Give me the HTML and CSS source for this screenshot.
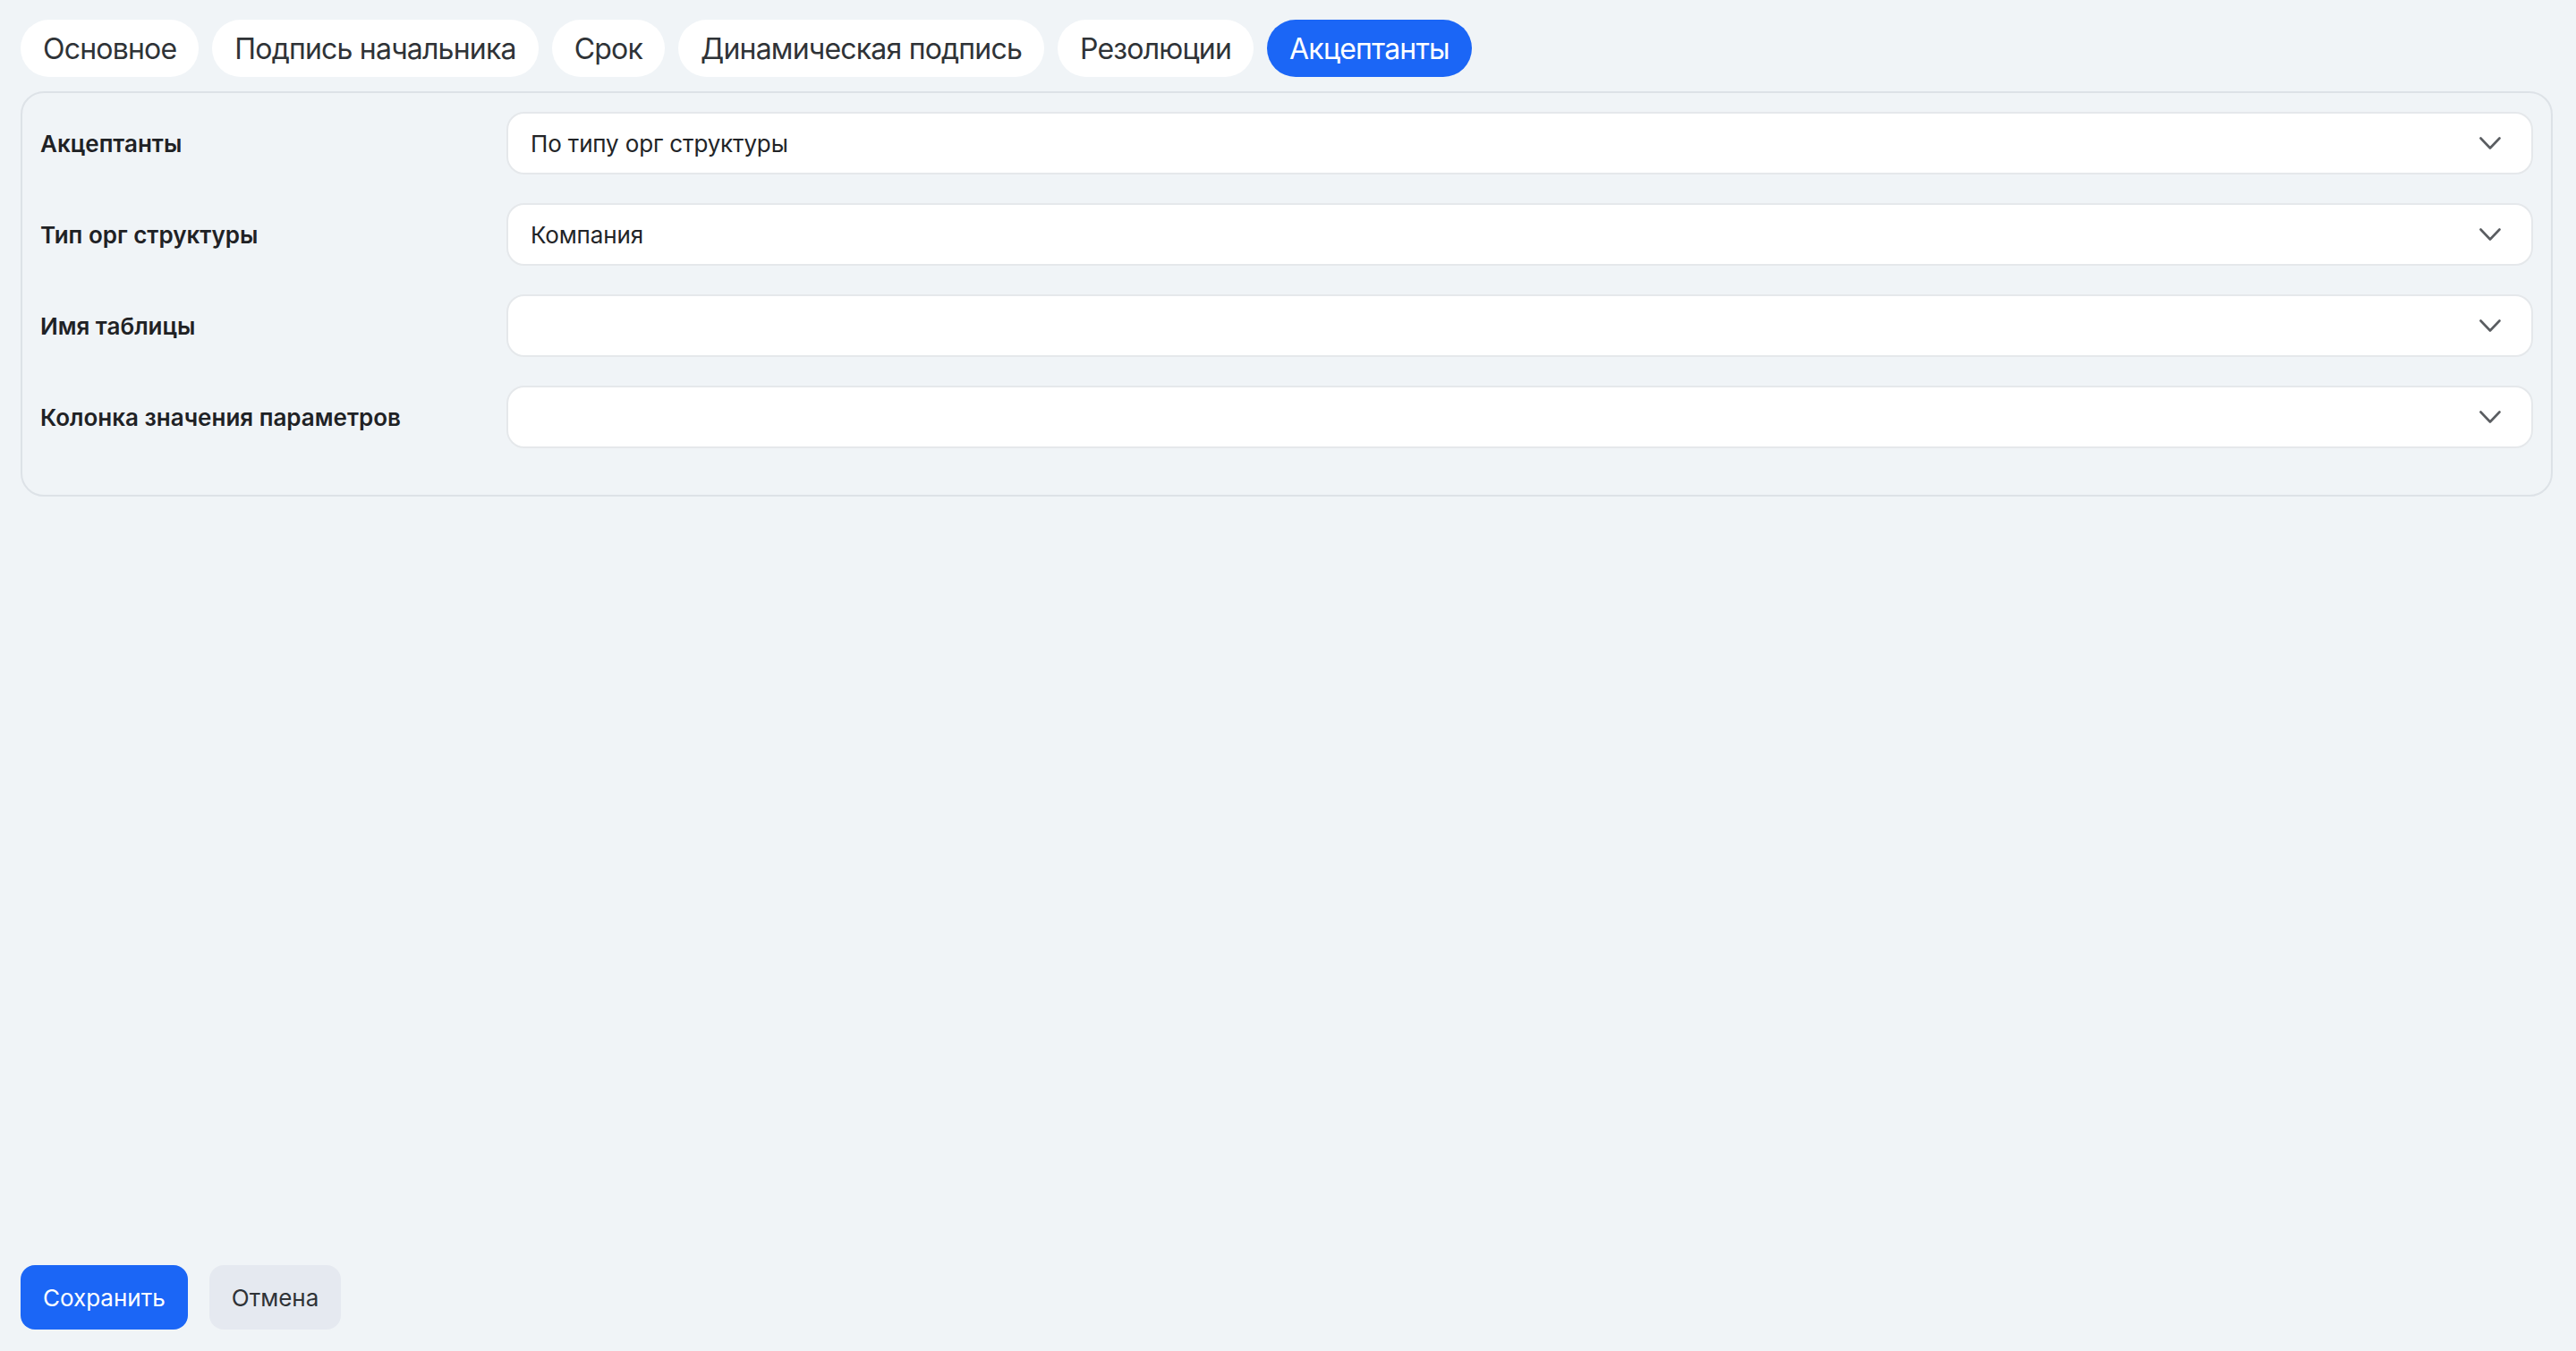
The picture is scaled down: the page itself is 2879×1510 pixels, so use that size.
FILE: index.html
```html
<!DOCTYPE html>
<html lang="ru">
<head>
<meta charset="utf-8">
<title>Акцептанты</title>
<link rel="stylesheet" href="styles.css">
</head>
<body>
<div class="page">
  <nav class="tabs">
    <button class="tab">Основное</button>
    <button class="tab">Подпись начальника</button>
    <button class="tab">Срок</button>
    <button class="tab">Динамическая подпись</button>
    <button class="tab">Резолюции</button>
    <button class="tab tab-active">Акцептанты</button>
  </nav>

  <section class="card">
    <div class="row">
      <div class="label">Акцептанты</div>
      <div class="select">
        <span class="value">По типу орг структуры</span>
        <svg class="chevron" viewBox="0 0 24 14" width="24" height="14"><polyline points="1.5,1.5 12,12.5 22.5,1.5"/></svg>
      </div>
    </div>
    <div class="row">
      <div class="label">Тип орг структуры</div>
      <div class="select">
        <span class="value">Компания</span>
        <svg class="chevron" viewBox="0 0 24 14" width="24" height="14"><polyline points="1.5,1.5 12,12.5 22.5,1.5"/></svg>
      </div>
    </div>
    <div class="row">
      <div class="label">Имя таблицы</div>
      <div class="select">
        <span class="value"></span>
        <svg class="chevron" viewBox="0 0 24 14" width="24" height="14"><polyline points="1.5,1.5 12,12.5 22.5,1.5"/></svg>
      </div>
    </div>
    <div class="row">
      <div class="label">Колонка значения параметров</div>
      <div class="select">
        <span class="value"></span>
        <svg class="chevron" viewBox="0 0 24 14" width="24" height="14"><polyline points="1.5,1.5 12,12.5 22.5,1.5"/></svg>
      </div>
    </div>
  </section>

  <footer class="actions">
    <button class="btn btn-primary">Сохранить</button>
    <button class="btn btn-secondary">Отмена</button>
  </footer>
</div>
</body>
</html>
```

FILE: styles.css
```css
* {
  box-sizing: border-box;
}

html, body {
  margin: 0;
  height: 100%;
}

body {
  background: #f0f4f7;
  font-family: Inter, "Noto Sans", "Liberation Sans", sans-serif;
  color: #1f2225;
}

.page {
  display: flex;
  flex-direction: column;
  min-height: 100vh;
  padding: 22px 26px 24px 23px;
}

/* tab strip */
.tabs {
  display: flex;
  gap: 15px;
}

.tab {
  display: flex;
  align-items: center;
  height: 64px;
  padding: 0 25px;
  border: 0;
  border-radius: 32px;
  background: #ffffff;
  color: #2f3337;
  font-family: inherit;
  font-size: 32px;
  font-weight: 400;
  letter-spacing: -0.8px;
  cursor: pointer;
}

.tab-active {
  background: #1b66f6;
  color: #ffffff;
}

/* form card */
.card {
  margin-top: 16px;
  border: 2px solid #dde2e7;
  border-radius: 26px;
  padding: 21px 20px 20px 20px;
}

.row {
  display: grid;
  grid-template-columns: 521px 1fr;
  align-items: center;
  margin-bottom: 32px;
}

.label {
  font-size: 26px;
  font-weight: 600;
  color: #1f2225;
}

.select {
  display: flex;
  align-items: center;
  justify-content: space-between;
  height: 70px;
  padding: 0 34px 0 25px;
  background: #ffffff;
  border: 2px solid #e5e8eb;
  border-radius: 20px;
}

.value {
  font-size: 26px;
  letter-spacing: -0.15px;
  color: #222427;
}

.chevron {
  flex: none;
}

.chevron polyline {
  fill: none;
  stroke: #5a5d61;
  stroke-width: 2.6;
  stroke-linecap: round;
  stroke-linejoin: round;
}

/* bottom buttons */
.actions {
  margin-top: auto;
  display: flex;
  gap: 24px;
}

.btn {
  height: 72px;
  padding: 0 25px;
  border: 0;
  border-radius: 16px;
  font-family: inherit;
  font-size: 26px;
  cursor: pointer;
}

.btn-primary {
  background: #1b66f6;
  color: #ffffff;
}

.btn-secondary {
  background: #e5e9f0;
  color: #2f3337;
}
```
